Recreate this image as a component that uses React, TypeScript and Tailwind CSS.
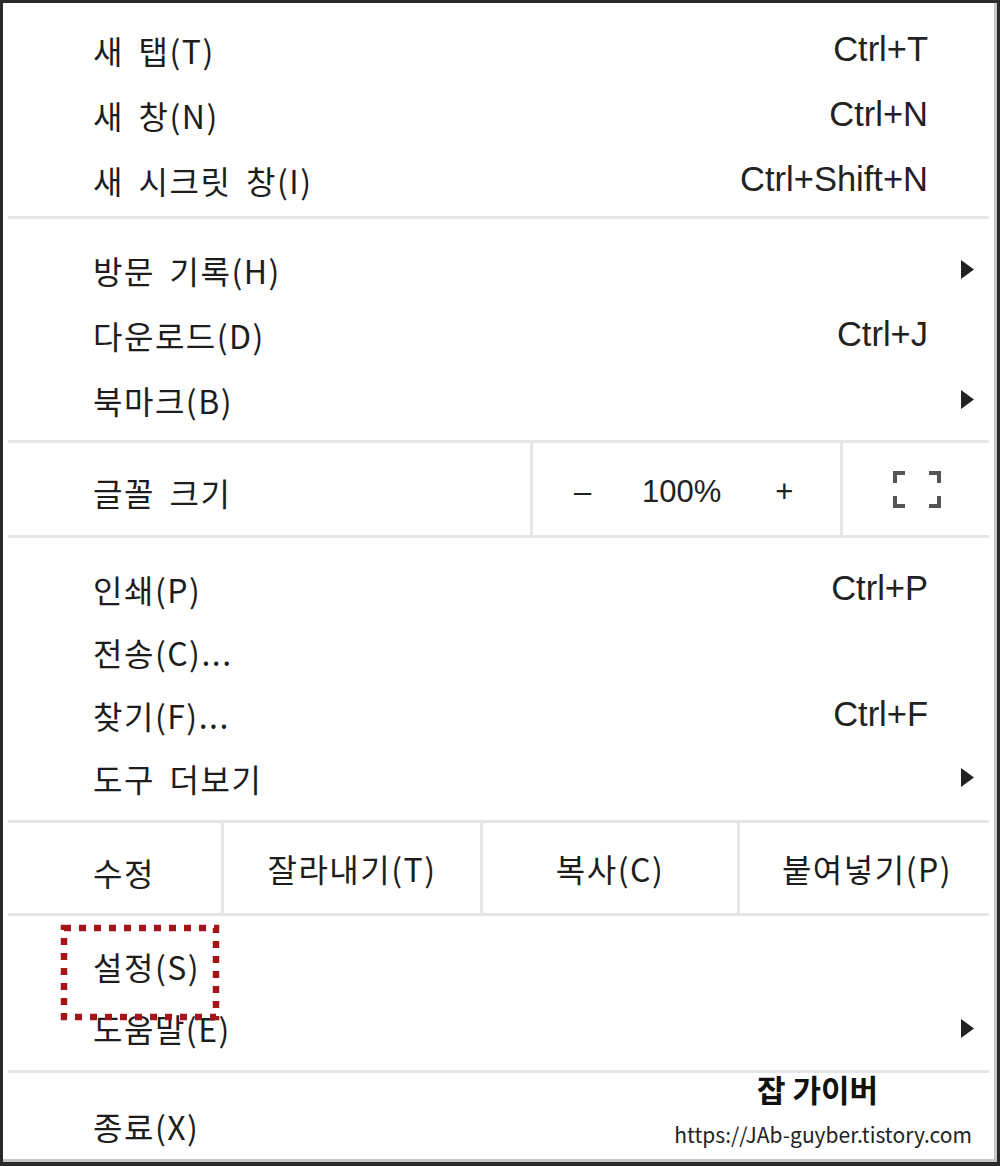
const ko = "font-['Noto_Sans_CJK_KR','Noto_Sans',sans-serif]";
const kb = "font-['Liberation_Sans','Noto_Sans_CJK_KR',sans-serif]";

type Item = { label: string; shortcut?: string; sub?: boolean; h: number };

function Arrow() {
  return (
    <svg width="13" height="19" viewBox="0 0 13 19" className="mr-[20px]">
      <polygon points="0,0 13,9.5 0,19" fill="#222" />
    </svg>
  );
}

function Row({ item }: { item: Item }) {
  return (
    <div className="flex items-center justify-between pl-[90px]" style={{ height: item.h }}>
      <span className={`${ko} text-[32px] text-[#1d1d1d] tracking-[1.5px] [word-spacing:6px]`}>{item.label}</span>
      {item.shortcut && (
        <span className={`${kb} text-[34.5px] text-[#222] mr-[66px]`}>{item.shortcut}</span>
      )}
      {item.sub && <Arrow />}
    </div>
  );
}

function Sep() {
  return <div className="mx-[5px] h-[3px] bg-[#e6e6e6]" />;
}

function Section({ items, pt, pb }: { items: Item[]; pt: number; pb: number }) {
  return (
    <div style={{ paddingTop: pt, paddingBottom: pb }}>
      {items.map((it) => (
        <Row key={it.label} item={it} />
      ))}
    </div>
  );
}

function FullscreenIcon() {
  return (
    <svg width="48" height="37" viewBox="0 0 48 37" fill="none" stroke="#555" strokeWidth="4">
      <path d="M2 12V2h10" />
      <path d="M36 2h10v10" />
      <path d="M2 25v10h10" />
      <path d="M36 35h10V25" />
    </svg>
  );
}

function DottedBox() {
  return (
    <svg
      width="162"
      height="98"
      viewBox="0 0 162 98"
      className="absolute left-[57px] top-[921px]"
      fill="none"
    >
      <rect x="4" y="4" width="152" height="89" stroke="#a3151a" strokeWidth="6.5" strokeDasharray="7 8" />
    </svg>
  );
}

export default function App() {
  const s1: Item[] = [
    { label: '새 탭(T)', shortcut: 'Ctrl+T', h: 65 },
    { label: '새 창(N)', shortcut: 'Ctrl+N', h: 65 },
    { label: '새 시크릿 창(I)', shortcut: 'Ctrl+Shift+N', h: 65 },
  ];
  const s2: Item[] = [
    { label: '방문 기록(H)', sub: true, h: 65 },
    { label: '다운로드(D)', shortcut: 'Ctrl+J', h: 65 },
    { label: '북마크(B)', sub: true, h: 65 },
  ];
  const s4: Item[] = [
    { label: '인쇄(P)', shortcut: 'Ctrl+P', h: 63 },
    { label: '전송(C)...', h: 63 },
    { label: '찾기(F)...', shortcut: 'Ctrl+F', h: 63 },
    { label: '도구 더보기', sub: true, h: 63 },
  ];
  const s6: Item[] = [
    { label: '설정(S)', h: 62 },
    { label: '도움말(E)', sub: true, h: 62 },
  ];

  return (
    <div className="relative w-[1000px] h-[1166px] bg-white border-l-[3px] border-t-[3px] border-r-[3px] border-b-[4px] border-[#2a2a2a]">
      <div className="h-full border-r-[3px] border-b-[3px] border-[#c8c8c8] bg-white flex flex-col">
        <Section items={s1} pt={14} pb={4} />
        <Sep />
        <Section items={s2} pt={18} pb={8} />
        <Sep />

        <div className="flex h-[92px]">
          <div className={`flex-1 flex items-center pl-[90px] pt-[6px] ${ko} text-[32px] text-[#1d1d1d] tracking-[1.5px] [word-spacing:6px]`}>
            글꼴 크기
          </div>
          <div className="w-[3px] bg-[#e6e6e6]" />
          <div className={`w-[307px] flex items-center pt-[6px] ${kb} text-[31px] text-[#222]`}>
            <span className="ml-[41px] w-[20px]">–</span>
            <span className="ml-[48px]">100%</span>
            <span className="ml-[54px]">+</span>
          </div>
          <div className="w-[3px] bg-[#e6e6e6]" />
          <div className="w-[151px] flex items-center pl-[50px]">
            <FullscreenIcon />
          </div>
        </div>
        <Sep />

        <Section items={s4} pt={19} pb={11} />
        <Sep />

        <div className={`flex h-[90px] ${ko} text-[32px] text-[#1d1d1d] tracking-[1.5px]`}>
          <div className="w-[218px] flex items-center pl-[90px] pt-[8px]">수정</div>
          <div className="w-[3px] bg-[#e6e6e6]" />
          <div className="w-[256px] flex items-center justify-center">잘라내기(T)</div>
          <div className="w-[3px] bg-[#e6e6e6]" />
          <div className="w-[254px] flex items-center justify-center">복사(C)</div>
          <div className="w-[3px] bg-[#e6e6e6]" />
          <div className="flex-1 flex items-center justify-center">붙여넣기(P)</div>
        </div>
        <Sep />

        <Section items={s6} pt={19} pb={11} />
        <Sep />

        <div className="pt-[21px]">
          <Row item={{ label: '종료(X)', h: 63 }} />
        </div>
      </div>

      <DottedBox />

      <div className="absolute left-[754px] top-[1063px] text-[31px] font-bold text-[#111] font-['Noto_Sans_CJK_KR',sans-serif]">
        잡 가이버
      </div>
      <div className="absolute right-[25px] top-[1116px] text-[21px] text-[#222] font-['Noto_Sans_CJK_KR',sans-serif]">
        https://JAb-guyber.tistory.com
      </div>
    </div>
  );
}
